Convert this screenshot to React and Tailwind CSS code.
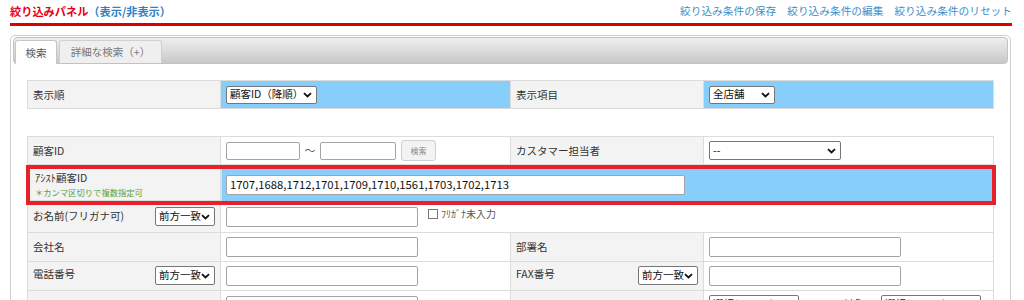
import React from "react";

const Chevron = () => (
  <svg width="9" height="6" viewBox="0 0 9 6" className="shrink-0">
    <path d="M1 1.2l3.5 3.3L8 1.2" fill="none" stroke="#111" strokeWidth="1.8" />
  </svg>
);

const Select = ({ className = "", children }) => (
  <div
    className={`flex items-center justify-between pl-[3px] pr-[4px] bg-white border border-[#767676] rounded-[2px] text-[10.5px] text-[#111] leading-none whitespace-nowrap overflow-hidden ${className}`}
  >
    <span>{children}</span>
    <Chevron />
  </div>
);

const Input = ({ className = "", children }) => (
  <div
    className={`flex items-center bg-white border border-[#a3a3a3] rounded-[2px] ${className}`}
  >
    {children}
  </div>
);

const Label = ({ className = "", children }) => (
  <div
    className={`flex bg-[#f2f3f2] border-r border-b border-[#dcdcdc] px-[5px] text-[10.5px] text-[#333] ${className}`}
  >
    {children}
  </div>
);

const Value = ({ className = "", children }) => (
  <div
    className={`flex border-r border-b border-[#dcdcdc] px-[5px] ${className}`}
  >
    {children}
  </div>
);

export default function App() {
  return (
    <div className="w-[1024px] h-[300px] overflow-hidden bg-white font-['Noto_Sans_CJK_JP',sans-serif]">
      {/* header */}
      <div className="ml-[10px] w-[1002px] h-[26px] flex items-center justify-between border-b-[3px] border-[#dc0000]">
        <div className="text-[11.2px] font-bold text-[#e60012] leading-none">
          絞り込みパネル<span className="text-[#2c83c6]">（表示/非表示）</span>
        </div>
        <div className="flex gap-[11px] text-[10.7px] text-[#3c8fc9] leading-none">
          <span>絞り込み条件の保存</span>
          <span>絞り込み条件の編集</span>
          <span>絞り込み条件のリセット</span>
        </div>
      </div>

      {/* panel */}
      <div className="ml-[10px] mt-[9px] w-[1001px] h-[300px] border border-[#cfcfcf] rounded-t-[5px] px-[2px] pt-[1px]">
        <div className="h-[27px] flex items-end gap-[2px] pl-[1px] border border-[#c2c2c2] rounded-[4px] bg-linear-to-b from-[#efefef] to-[#c8c8c8]">
          <div className="w-[42px] h-[24px] -mb-px flex items-center justify-center bg-white border border-b-0 border-[#c6c6c6] rounded-t-[3px] text-[10.5px] text-[#555]">
            検索
          </div>
          <div className="w-[103px] h-[23px] flex items-center justify-center bg-[#efefef] border border-b-0 border-[#d0d0d0] rounded-t-[3px] text-[10.5px] text-[#777]">
            詳細な検索（+）
          </div>
        </div>

        <div className="ml-[14px] mt-[16px] w-[967px]">
          {/* display settings */}
          <div className="flex border-t border-l border-[#dcdcdc]">
            <Label className="w-[193px] h-[28px] items-center">表示順</Label>
            <Value className="w-[290px] h-[28px] items-center bg-[#87cefa]">
              <Select className="w-[91px] h-[18px]">顧客ID（降順）</Select>
            </Value>
            <Label className="w-[193px] h-[28px] items-center">表示項目</Label>
            <Value className="w-[290px] h-[28px] items-center bg-[#87cefa]">
              <Select className="w-[66px] h-[18px]">全店舗</Select>
            </Value>
          </div>

          {/* search conditions */}
          <div className="mt-[27px] border-t border-l border-[#dcdcdc]">
            <div className="flex">
              <Label className="w-[193px] h-[28px] items-center">顧客ID</Label>
              <Value className="w-[290px] h-[28px] items-center">
                <Input className="w-[74px] h-[18px]" />
                <span className="w-[20px] text-center text-[11px] text-[#555]">～</span>
                <Input className="w-[76px] h-[18px]" />
                <div className="ml-[5px] w-[35px] h-[21px] flex items-center justify-center bg-[#f3f3f3] border border-[#cfcfcf] rounded-[3px] text-[8px] text-[#888]">
                  検索
                </div>
              </Value>
              <Label className="w-[193px] h-[28px] items-center">カスタマー担当者</Label>
              <Value className="w-[290px] h-[28px] items-center">
                <Select className="w-[132px] h-[19px]">--</Select>
              </Value>
            </div>

            <div className="flex -ml-[2px] w-[970px] h-[40px] border-4 border-[#e8202a]">
              <Label className="w-[191px] flex-col justify-center gap-[4px]">
                <span className="leading-none">ｱｼｽﾄ顧客ID</span>
                <span className="text-[8.3px] text-[#5aa03c] leading-none">＊カンマ区切りで複数指定可</span>
              </Label>
              <div className="flex items-center w-[771px] bg-[#87cefa] border-l border-[#dcdcdc] pl-[4px]">
                <Input className="w-[459px] h-[20px] px-[3px] text-[11.3px] text-[#111] leading-none">
                  1707,1688,1712,1701,1709,1710,1561,1703,1702,1713
                </Input>
              </div>
            </div>

            <div className="flex">
              <Label className="w-[193px] h-[28px] items-start justify-between pt-[2px]">
                <span className="leading-[18px]">お名前(フリガナ可)</span>
                <Select className="w-[60px] h-[19px]">前方一致</Select>
              </Label>
              <Value className="w-[773px] h-[28px] items-start pt-[2px]">
                <Input className="w-[192px] h-[20px]" />
                <div className="ml-[10px] mt-[2px] flex items-center gap-[3px]">
                  <div className="w-[10px] h-[10px] border border-[#777] bg-white" />
                  <span className="text-[10px] text-[#555] leading-none">ﾌﾘｶﾞﾅ未入力</span>
                </div>
              </Value>
            </div>

            <div className="flex">
              <Label className="w-[193px] h-[29px] items-center">会社名</Label>
              <Value className="w-[290px] h-[29px] items-center">
                <Input className="w-[192px] h-[20px]" />
              </Value>
              <Label className="w-[193px] h-[29px] items-center">部署名</Label>
              <Value className="w-[290px] h-[29px] items-center">
                <Input className="w-[192px] h-[20px]" />
              </Value>
            </div>

            <div className="flex">
              <Label className="w-[193px] h-[29px] items-start justify-between pt-[4px]">
                <span className="leading-[16px]">電話番号</span>
                <Select className="w-[60px] h-[19px]">前方一致</Select>
              </Label>
              <Value className="w-[290px] h-[29px] items-start pt-[4px]">
                <Input className="w-[192px] h-[20px]" />
              </Value>
              <Label className="w-[193px] h-[29px] items-start justify-between pt-[4px]">
                <span className="leading-[16px]">FAX番号</span>
                <Select className="w-[60px] h-[19px]">前方一致</Select>
              </Label>
              <Value className="w-[290px] h-[29px] items-start pt-[4px]">
                <Input className="w-[192px] h-[20px]" />
              </Value>
            </div>

            <div className="flex">
              <Label className="w-[193px] h-[40px] items-start pt-[18px]">メールアドレス</Label>
              <Value className="w-[290px] h-[40px] items-start pt-[5px]">
                <Input className="w-[192px] h-[20px]" />
              </Value>
              <Label className="w-[193px] h-[40px] items-start pt-[18px]">登録日</Label>
              <Value className="w-[290px] h-[40px] items-start pt-[4px]">
                <Select className="w-[90px] h-[19px]">選択して下さい</Select>
                <span className="ml-[44px] mt-[4px] text-[10.5px] text-[#333] leading-none">対象</span>
                <Select className="ml-[17px] w-[100px] h-[19px]">選択して下さい</Select>
              </Value>
            </div>
          </div>
        </div>
      </div>
    </div>
  );
}
